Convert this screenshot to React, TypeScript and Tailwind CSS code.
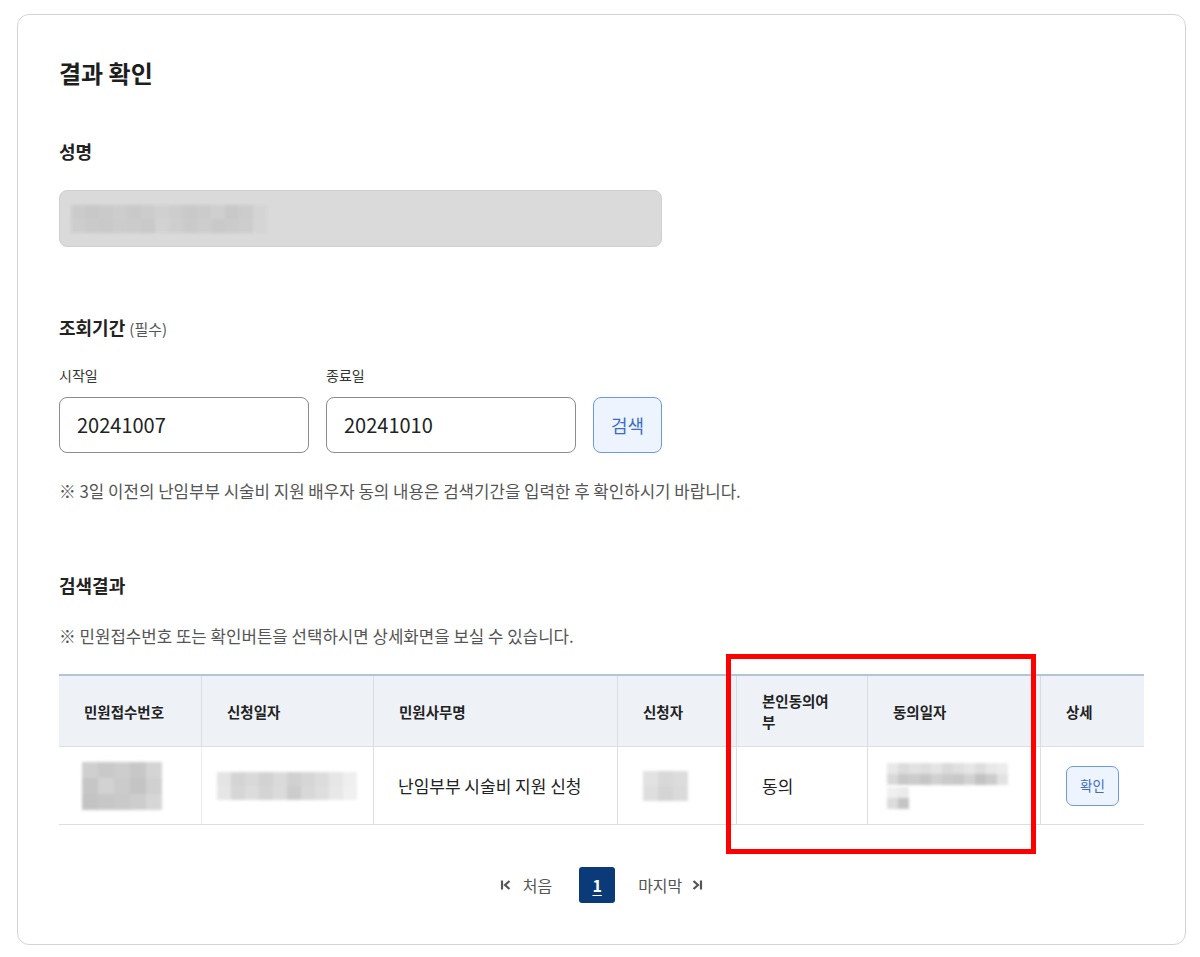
import React from "react";

const FONT = { fontFamily: '"Noto Sans CJK KR", "Noto Sans", sans-serif' };

// blurred mosaic placeholders for masked personal data
const Mosaic: React.FC<{ rows: string[][]; cell: number; className?: string }> = ({ rows, cell, className }) => (
  <div className={`flex flex-col blur-[1.5px] ${className ?? ""}`}>
    {rows.map((r, i) => (
      <div key={i} className="flex">
        {r.map((c, j) => (
          <div key={j} style={{ width: cell, height: cell, background: c }} />
        ))}
      </div>
    ))}
  </div>
);

const columns = [
  { label: "민원접수번호", w: "w-[142px]" },
  { label: "신청일자", w: "w-[172px]" },
  { label: "민원사무명", w: "w-[244px]" },
  { label: "신청자", w: "w-[119px]" },
  { label: "본인동의여부", w: "w-[131px]" },
  { label: "동의일자", w: "w-[173px]" },
  { label: "상세", w: "w-[104px]" },
];

export default function App() {
  return (
    <div className="min-h-[957px] bg-white pl-[17px] pt-[14px] text-[#222]" style={FONT}>
      <div className="w-[1169px] h-[931px] rounded-[12px] border border-[#d4d4d4] px-[41px] pt-[42px]">
        <h2 className="text-[24px] leading-[32px] font-bold text-[#1e1e1e]">결과 확인</h2>

        <div className="mt-[50px] text-[18px] leading-[24px] font-bold">성명</div>
        <div className="mt-[27px] w-[603px] h-[57px] rounded-[8px] border border-[#cfcfcf] bg-[#dadada] flex items-center pl-[11px]">
          <Mosaic
            cell={14}
            rows={[
              ["#cbcbcb", "#c8c8c8", "#cacaca", "#cdcdcd", "#c9c9c9", "#cccccc", "#d0d0d0", "#cdcdcd", "#c9c9c9", "#cbcbcb", "#cfcfcf", "#c8c8c8", "#cccccc", "#d4d4d4"],
              ["#cdcdcd", "#cacaca", "#c9c9c9", "#cccccc", "#cbcbcb", "#c9c9c9", "#d2d2d2", "#cecece", "#cacaca", "#cdcdcd", "#c9c9c9", "#cbcbcb", "#cdcdcd", "#d5d5d5"],
            ]}
          />
        </div>

        <div className="mt-[68px] text-[18px] leading-[24px] font-bold">
          조회기간 <span className="text-[15px] font-normal text-[#555]">(필수)</span>
        </div>
        <div className="mt-[24px] flex items-end gap-[17px]">
          <div>
            <div className="text-[14px] leading-[20px] text-[#333]">시작일</div>
            <div className="mt-[12px] w-[250px] h-[56px] rounded-[8px] border border-[#8c8c8c] flex items-center px-[17px] text-[20px]">20241007</div>
          </div>
          <div>
            <div className="text-[14px] leading-[20px] text-[#333]">종료일</div>
            <div className="mt-[12px] w-[250px] h-[56px] rounded-[8px] border border-[#8c8c8c] flex items-center px-[17px] text-[20px]">20241010</div>
          </div>
          <button className="w-[69px] h-[56px] rounded-[8px] border-[1.5px] border-[#6a9be6] bg-[#eef4fd] text-[18px] text-[#3d6cc2]">검색</button>
        </div>
        <p className="mt-[27px] text-[16.8px] leading-[22px] text-[#555]">
          ※ 3일 이전의 난임부부 시술비 지원 배우자 동의 내용은 검색기간을 입력한 후 확인하시기 바랍니다.
        </p>

        <div className="mt-[71px] text-[18px] leading-[24px] font-bold">검색결과</div>
        <p className="mt-[28px] text-[16.8px] leading-[22px] text-[#555]">
          ※ 민원접수번호 또는 확인버튼을 선택하시면 상세화면을 보실 수 있습니다.
        </p>

        <div className="relative mt-[27px] w-[1085px]">
          <div className="border-t-2 border-[#b3c3d8]">
            <div className="flex h-[71px] bg-[#eef2f6] border-b border-[#dcdfe3]">
              {columns.map((c, i) => (
                <div
                  key={c.label}
                  className={`${c.w} flex items-center pl-[25px] text-[14.5px] leading-[21px] font-bold text-[#222] ${i > 0 ? "border-l border-[#d8dde3]" : ""}`}
                >
                  <span className={i === 4 ? "w-[72px] break-all" : ""}>{c.label}</span>
                </div>
              ))}
            </div>
            <div className="flex h-[78px] border-b border-[#dedede] text-[17px] text-[#222]">
              <div className="w-[142px] flex items-center pl-[23px]">
                <Mosaic
                  cell={16}
                  rows={[
                    ["#cfcfcf", "#c9c9c9", "#cdcdcd", "#c7c7c7", "#d4d4d4"],
                    ["#c6c6c6", "#d2d2d2", "#cbcbcb", "#c4c4c4", "#d0d0d0"],
                    ["#c3c3c3", "#c7c7c7", "#c9c9c9", "#cdcdcd", "#d6d6d6"],
                  ]}
                />
              </div>
              <div className="w-[172px] flex items-center pl-[15px] border-l border-[#eeeeee]">
                <Mosaic
                  cell={14}
                  rows={[
                    ["#e4e4e4", "#d4d4d4", "#d9d9d9", "#d2d2d2", "#dadada", "#d0d0d0", "#d6d6d6", "#dcdcdc", "#e6e6e6", "#efefef"],
                    ["#e6e6e6", "#d6d6d6", "#dcdcdc", "#d4d4d4", "#dbdbdb", "#cccccc", "#d8d8d8", "#dedede", "#e8e8e8", "#f0f0f0"],
                  ]}
                />
              </div>
              <div className="w-[244px] flex items-center pl-[24px] border-l border-[#dedede]">난임부부 시술비 지원 신청</div>
              <div className="w-[119px] flex items-center pl-[25px] border-l border-[#dedede]">
                <Mosaic
                  cell={15}
                  rows={[
                    ["#e2e2e2", "#d8d8d8", "#dcdcdc"],
                    ["#dedede", "#d4d4d4", "#dadada"],
                  ]}
                />
              </div>
              <div className="w-[131px] flex items-center pl-[25px] border-l border-[#dedede]">동의</div>
              <div className="w-[173px] flex flex-col justify-center pl-[19px] border-l border-[#dedede] gap-[2px]">
                <Mosaic
                  cell={11}
                  rows={[
                    ["#e8e8e8", "#dcdcdc", "#e2e2e2", "#dedede", "#e4e4e4", "#dadada", "#e0e0e0", "#e6e6e6", "#dedede", "#e8e8e8", "#ececec"],
                    ["#d8d8d8", "#c8c8c8", "#cccccc", "#c6c6c6", "#d0d0d0", "#cacaca", "#c8c8c8", "#d2d2d2", "#c2c2c2", "#cccccc", "#e2e2e2"],
                  ]}
                />
                <Mosaic cell={11} rows={[["#f0f0f0", "#ebebeb"], ["#dcdcdc", "#c4c4c4"]]} />
              </div>
              <div className="w-[104px] flex items-center justify-center border-l border-[#dedede]">
                <button className="w-[53px] h-[40px] rounded-[7px] border-[1.5px] border-[#6a9be6] bg-[#eef4fd] text-[13.5px] text-[#3d6cc2]">확인</button>
              </div>
            </div>
          </div>

          {/* red highlight annotation */}
          <div className="absolute left-[667px] top-[-20px] w-[310px] h-[200px] border-[5px] border-[#ff0000] pointer-events-none" />
        </div>

        <div className="mt-[42px] flex items-center justify-center text-[16px] text-[#555]">
          <div className="flex items-center gap-[11px]">
            <svg width="12" height="12" viewBox="0 0 12 12" fill="none" stroke="#555" strokeWidth="2.2">
              <path d="M2 1.5v9M9.5 2L5 6l4.5 4" />
            </svg>
            <span>처음</span>
          </div>
          <div className="ml-[27px] mr-[23px] w-[36px] h-[36px] rounded-[3px] bg-[#0b3a78] flex items-center justify-center text-white font-bold text-[16px] underline underline-offset-[3px]">1</div>
          <div className="flex items-center gap-[9px]">
            <span>마지막</span>
            <svg width="12" height="12" viewBox="0 0 12 12" fill="none" stroke="#555" strokeWidth="2.2">
              <path d="M10 1.5v9M2.5 2L7 6l-4.5 4" />
            </svg>
          </div>
        </div>
      </div>
    </div>
  );
}
